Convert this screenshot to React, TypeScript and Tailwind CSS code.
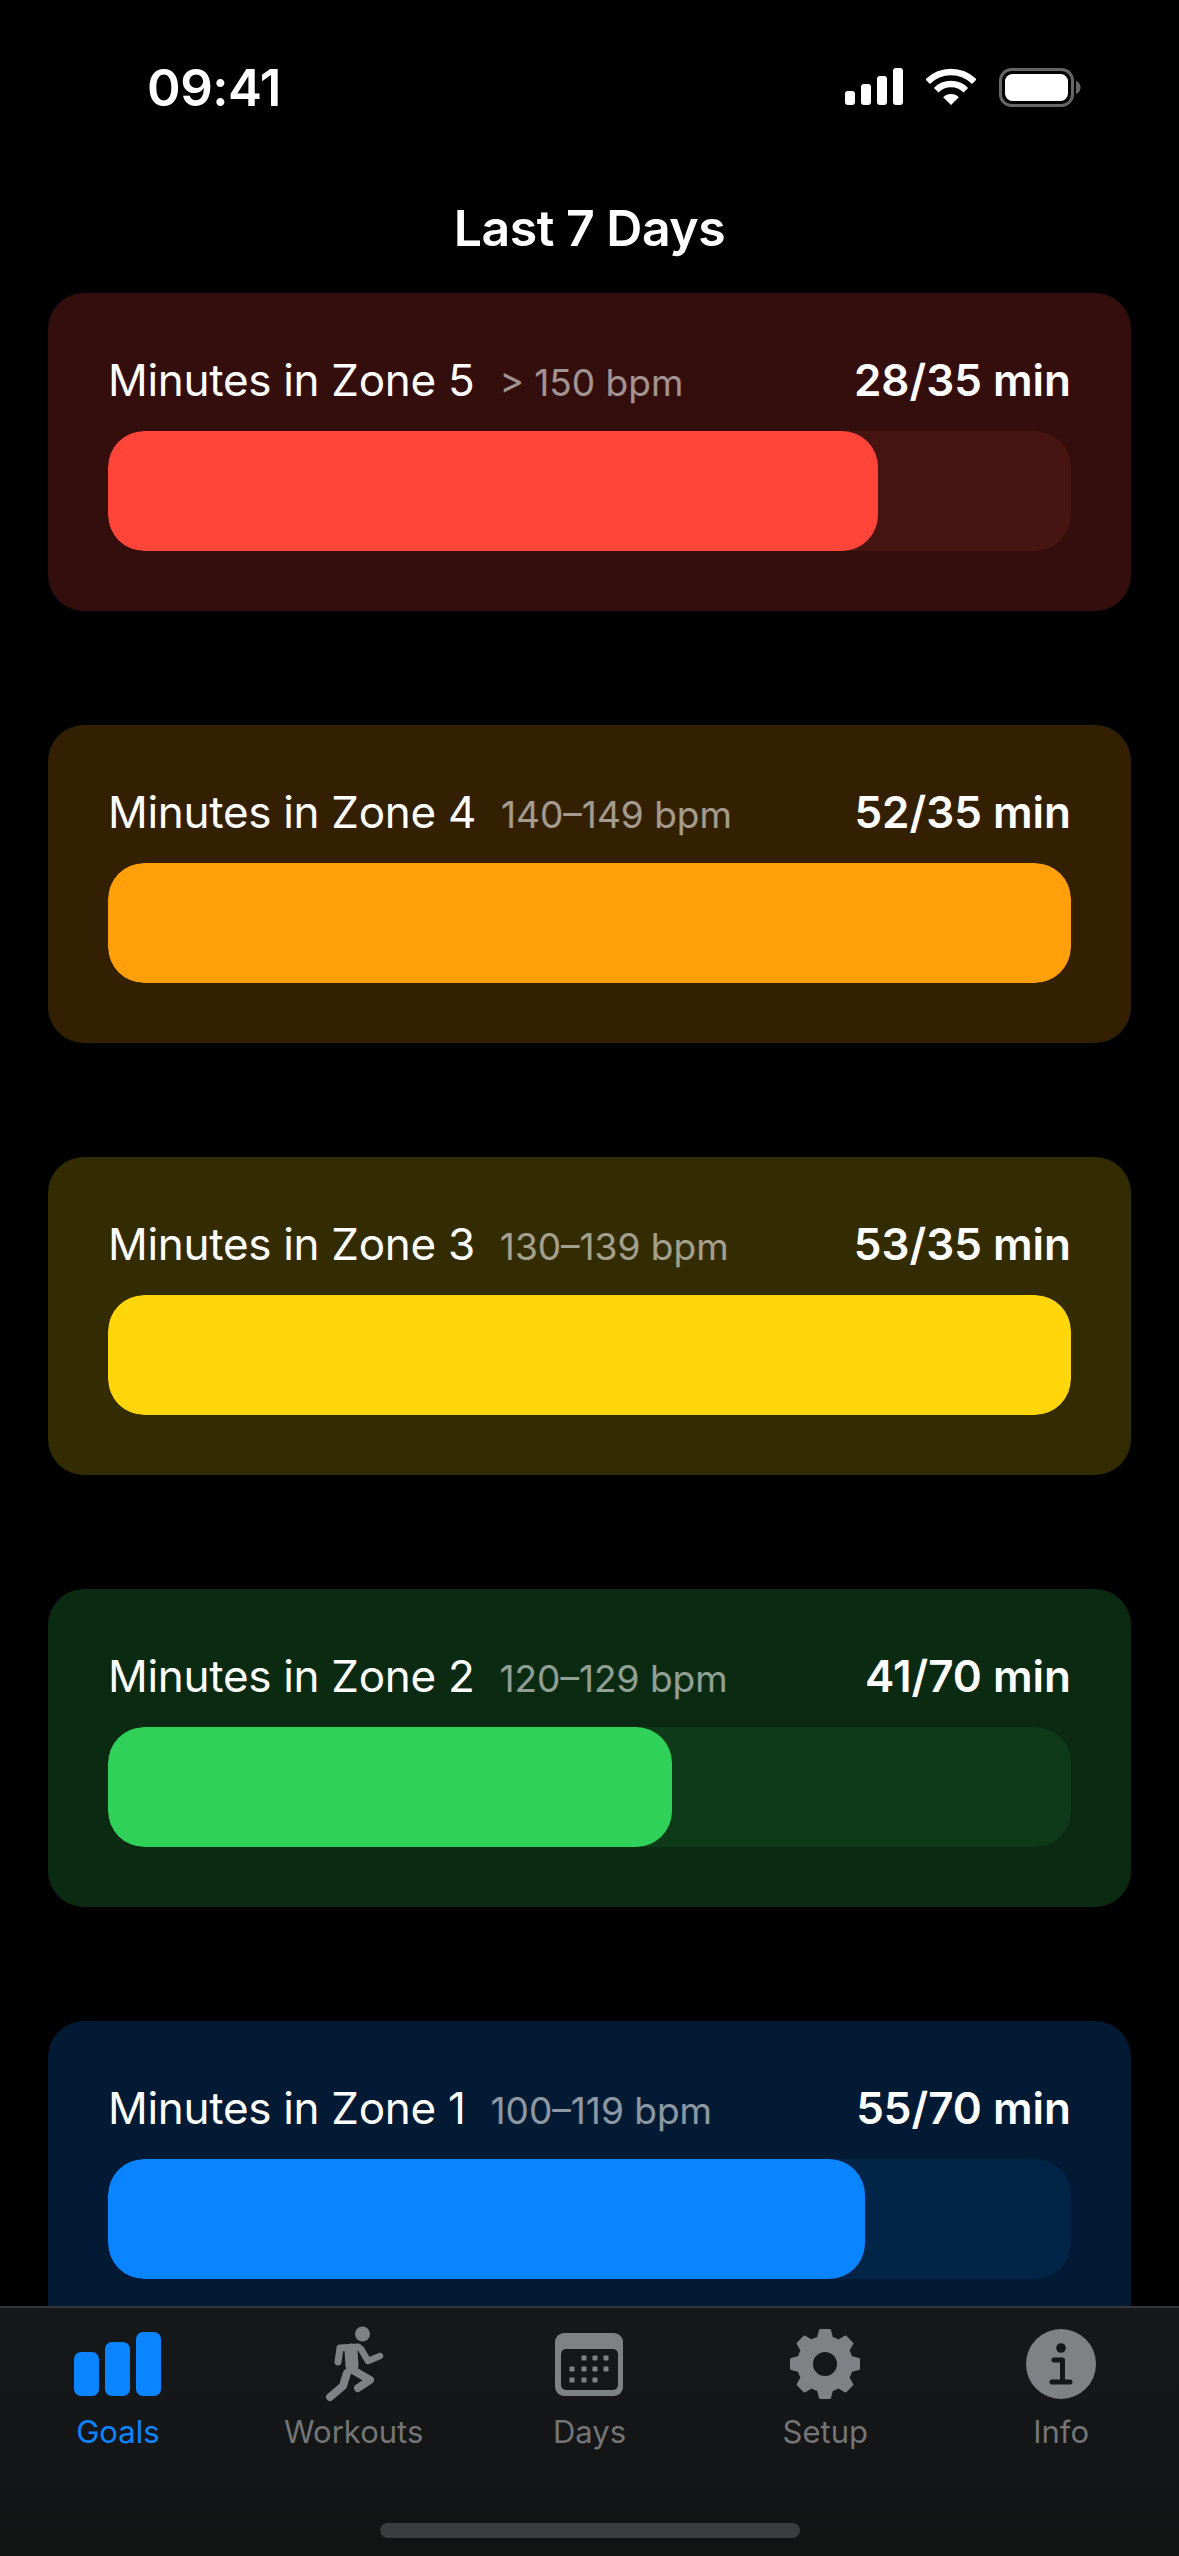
const zones = [
  { name: "Minutes in Zone 5", range: "> 150 bpm", value: "28/35 min", pct: 80, card: "bg-[#330e0c]", track: "bg-[#471511]", fill: "bg-[#ff453a]" },
  { name: "Minutes in Zone 4", range: "140–149 bpm", value: "52/35 min", pct: 100, card: "bg-[#332002]", track: "bg-[#47300f]", fill: "bg-[#ff9f0a]" },
  { name: "Minutes in Zone 3", range: "130–139 bpm", value: "53/35 min", pct: 100, card: "bg-[#332b02]", track: "bg-[#47400f]", fill: "bg-[#ffd60a]" },
  { name: "Minutes in Zone 2", range: "120–129 bpm", value: "41/70 min", pct: 58.57, card: "bg-[#0a2a12]", track: "bg-[#0f3a1a]", fill: "bg-[#30d158]" },
  { name: "Minutes in Zone 1", range: "100–119 bpm", value: "55/70 min", pct: 78.57, card: "bg-[#021a33]", track: "bg-[#022447]", fill: "bg-[#0a84ff]" },
];

function Signal() {
  return (
    <svg width="58" height="37" viewBox="0 0 58 37" fill="#fff">
      <rect x="0" y="23" width="10" height="14" rx="3" />
      <rect x="16" y="16" width="10" height="21" rx="3" />
      <rect x="32" y="8" width="10" height="29" rx="3" />
      <rect x="48" y="0" width="10" height="37" rx="3" />
    </svg>
  );
}

function Wifi() {
  return (
    <svg width="50" height="37" viewBox="0 0 50 37" fill="none" stroke="#fff" strokeWidth="6.5">
      <path d="M1.7 13.7A33 33 0 0 1 48.3 13.7" />
      <path d="M10.2 22.2A21 21 0 0 1 39.8 22.2" />
      <path d="M25 37L17.2 29.2A11 11 0 0 1 32.8 29.2Z" fill="#fff" stroke="none" />
    </svg>
  );
}

function Battery() {
  return (
    <svg width="82" height="39" viewBox="0 0 82 39" fill="none">
      <rect x="1.5" y="1.5" width="72" height="36" rx="11" stroke="#666" strokeWidth="3" />
      <rect x="6" y="6" width="63" height="27" rx="7.5" fill="#fff" />
      <path d="M77 13c3 1 4.500 3.500 4.500 6.500S80 25 77 26Z" fill="#666" />
    </svg>
  );
}

function GoalsIcon() {
  return (
    <svg width="87" height="64" viewBox="0 0 87 64" fill="#0a84ff">
      <rect x="0" y="20" width="25" height="44" rx="7" />
      <rect x="31" y="10" width="25" height="54" rx="7" />
      <rect x="62" y="0" width="25" height="64" rx="7" />
    </svg>
  );
}

function RunIcon() {
  return (
    <svg width="60" height="76" viewBox="0 0 60 76" fill="none" stroke="#7f8284" strokeLinecap="round" strokeLinejoin="round">
      <circle cx="38.500" cy="8" r="7.500" fill="#7f8284" stroke="none" />
      <path d="M14 36L16 22L34 21" strokeWidth="7" />
      <path d="M27 24L28 40" strokeWidth="13" />
      <path d="M37 23L44 35L56 30" strokeWidth="6.500" />
      <path d="M27 43L46 54L34 62" strokeWidth="8" />
      <path d="M23 47L19 60L6 71" strokeWidth="8" />
    </svg>
  );
}

function DaysIcon() {
  const dots = [
    [29, 25], [40, 25], [51, 25],
    [17, 36], [29, 36], [40, 36], [51, 36],
    [17, 47], [29, 47], [40, 47],
  ];
  return (
    <svg width="68" height="63" viewBox="0 0 68 63">
      <rect width="68" height="63" rx="9" fill="#7f8284" />
      <rect x="6" y="16" width="57" height="41" rx="5" fill="#15181a" />
      {dots.map(([x, y]) => (
        <rect key={`${x}-${y}`} x={x - 2.500} y={y - 2.500} width="5" height="5" rx="1" fill="#7f8284" />
      ))}
    </svg>
  );
}

function GearIcon() {
  const angles = [0, 45, 90, 135, 180, 225, 270, 315];
  return (
    <svg width="72" height="72" viewBox="0 0 72 72" fill="#7f8284">
      <circle cx="36" cy="36" r="20" fill="none" stroke="#7f8284" strokeWidth="16" />
      {angles.map((a) => (
        <path
          key={a}
          d="M29 12L31.500 2.500H40.500L43 12Z"
          stroke="#7f8284"
          strokeWidth="3"
          strokeLinejoin="round"
          transform={`rotate(${a} 36 36)`}
        />
      ))}
    </svg>
  );
}

function InfoIcon() {
  return (
    <svg width="70" height="70" viewBox="0 0 70 70">
      <circle cx="35" cy="35" r="35" fill="#7f8284" />
      <circle cx="35" cy="19" r="4.800" fill="#15181a" />
      <path d="M28 31H36.500V51M26 53H44" fill="none" stroke="#15181a" strokeWidth="5" strokeLinecap="round" strokeLinejoin="round" />
    </svg>
  );
}

const tabs = [
  { label: "Goals", icon: <GoalsIcon />, active: true },
  { label: "Workouts", icon: <RunIcon />, active: false },
  { label: "Days", icon: <DaysIcon />, active: false },
  { label: "Setup", icon: <GearIcon />, active: false },
  { label: "Info", icon: <InfoIcon />, active: false },
];

export default function App() {
  return (
    <div className="flex h-[2556px] w-[1179px] flex-col overflow-hidden bg-black font-['Inter','Liberation_Sans',sans-serif] text-white">
      <div className="flex h-[293px] shrink-0 flex-col">
        <div className="flex items-start justify-between pl-[147px] pr-[98px] pt-[68px]">
          <span className="text-[51px] font-semibold leading-[39px] tracking-[-0.5px]">09:41</span>
          <div className="flex items-start gap-[23px]">
            <Signal />
            <Wifi />
            <Battery />
          </div>
        </div>
        <h1 className="mt-[97px] text-center text-[50px] font-semibold leading-[48px] tracking-[-0.5px]">Last 7 Days</h1>
      </div>

      <div className="flex min-h-0 flex-1 flex-col gap-[114px] overflow-hidden px-[48px]">
        {zones.map((z) => (
          <section key={z.name} className={`shrink-0 rounded-[36px] px-[60px] pb-[60px] pt-[60px] ${z.card}`}>
            <div className="mb-[24px] flex h-[54px] items-baseline justify-between">
              <div className="flex items-baseline gap-[25px]">
                <span className="text-[44px] leading-[54px] tracking-[-0.3px]">{z.name}</span>
                <span className="text-[37px] leading-[54px] text-white/55">{z.range}</span>
              </div>
              <span className="text-[44px] font-semibold leading-[54px]">{z.value}</span>
            </div>
            <div className={`h-[120px] overflow-hidden rounded-[36px] ${z.track}`}>
              <div className={`h-full rounded-[36px] ${z.fill}`} style={{ width: `${z.pct}%` }} />
            </div>
          </section>
        ))}
      </div>

      <nav className="h-[250px] shrink-0 border-t-2 border-white/15 bg-gradient-to-b from-[#16191b] to-[#121313]">
        <div className="grid grid-cols-5">
          {tabs.map((t) => (
            <div key={t.label} className="flex flex-col items-center">
              <div className="mt-[18px] flex h-[76px] items-center justify-center">{t.icon}</div>
              <span className={`mt-[12px] text-[31px] leading-[36px] ${t.active ? "text-[#0a84ff]" : "text-[#737576]"}`}>{t.label}</span>
            </div>
          ))}
        </div>
        <div className="mx-auto mt-[73px] h-[15px] w-[420px] rounded-full bg-[#3b3c3d]" />
      </nav>
    </div>
  );
}
